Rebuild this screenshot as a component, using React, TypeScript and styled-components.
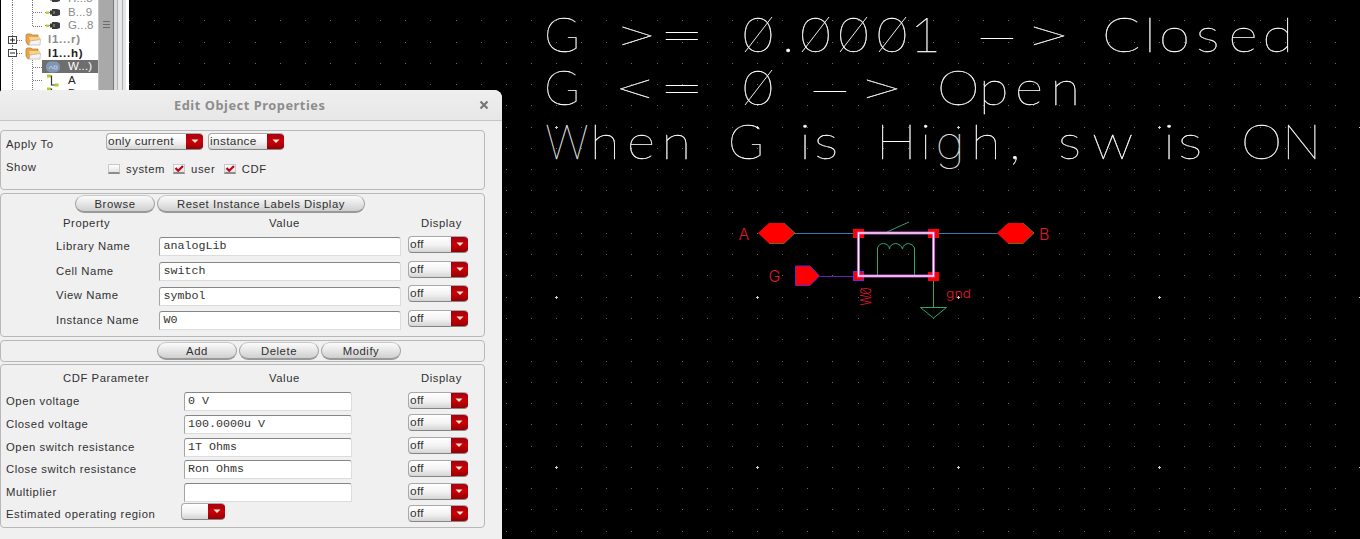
import React from "react";
import styled, { createGlobalStyle } from "styled-components";

const Global = createGlobalStyle`
  html, body { margin: 0; padding: 0; background: #000; }
  * { box-sizing: border-box; }
`;

const Screen = styled.div`
  position: relative;
  width: 1360px;
  height: 539px;
  overflow: hidden;
  background: #000;
  font-family: "Liberation Sans", Arial, sans-serif;
`;

const Canvas = styled.svg`
  display: block;
  width: 1360px;
  height: 539px;
`;

/* ---------- navigator ---------- */

const Navigator = styled.div`
  position: absolute;
  left: 1px;
  top: 0;
  display: flex;
  width: 128px;
  height: 92px;
  overflow: hidden;
  background: #fff;
`;

const Tree = styled.div`
  width: 97px;
  margin-top: -8px;
`;

const TreeRow = styled.div`
  display: flex;
  align-items: center;
  height: 13.6px;
`;

const Guide = styled.svg`
  flex: none;
  display: block;
`;

const TreeItem = styled.div<{ $selected?: boolean; $bold?: boolean; $dim?: boolean }>`
  display: flex;
  align-items: center;
  flex: 1;
  height: 13px;
  gap: 7px;
  padding-left: 3px;
  background: ${(p) => (p.$selected ? "#6e6e6e" : "transparent")};
  color: ${(p) => (p.$selected ? "#fff" : p.$dim ? "#8a8a8a" : "#222")};
  font-size: 11.5px;
  font-weight: ${(p) => (p.$bold ? 700 : 400)};
  letter-spacing: ${(p) => (p.$bold ? 0.75 : 0.1)}px;
  line-height: 13px;
  white-space: nowrap;
`;

const ScrollTrack = styled.div`
  display: flex;
  flex-direction: column;
  align-items: center;
  gap: 2px;
  width: 16px;
  padding-top: 21px;
  background: #a9a9a9;
  border-right: 1px solid #777;
  border-left: 1px solid #c4c4c4;
`;

const Grip = styled.div`
  width: 7px;
  height: 1px;
  background: #6b6b6b;
`;

const Frame = styled.div`
  flex: 1;
  background: linear-gradient(90deg, #dcdcdc 0 3px, #b4b4b4 3px 4px, #e9e9e9 4px 8px, #a9b0b4 8px 9px, #e4e6e8 9px 12px, #fff 12px);
`;

/* ---------- dialog ---------- */

const Dialog = styled.section`
  position: absolute;
  left: 0;
  top: 90px;
  width: 502px;
  height: 460px;
  background: #f1f0f1;
  border-radius: 3px 8px 0 0;
  overflow: hidden;
  color: #303030;
`;

const TitleBar = styled.header`
  display: flex;
  align-items: center;
  height: 31px;
  padding: 0 13px 0 174px;
  background: linear-gradient(#efefef, #e8e7e7);
  border-bottom: 1px solid #c6c6c6;
`;

const Title = styled.h1`
  flex: 1;
  margin: 0;
  font: 700 12.8px/31px "Noto Sans", sans-serif;
  letter-spacing: 0.55px;
  color: #8d8d8d;
`;

const Group = styled.div<{ $h: number; $mt: number }>`
  display: flex;
  flex-direction: column;
  width: 485px;
  height: ${(p) => p.$h}px;
  margin-top: ${(p) => p.$mt}px;
  border: 1px solid #b8b8b8;
  border-radius: 4px;
`;

const Text = styled.span<{ $w?: number; $pad?: number }>`
  flex: none;
  width: ${(p) => (p.$w ? p.$w + "px" : "auto")};
  padding-left: ${(p) => p.$pad ?? 0}px;
  font-size: 11.3px;
  line-height: 16px;
  letter-spacing: 0.55px;
  white-space: nowrap;
`;

const Line = styled.div<{ $h: number; $pad?: number; $gap?: number }>`
  display: flex;
  flex: none;
  align-items: center;
  gap: ${(p) => p.$gap ?? 0}px;
  height: ${(p) => p.$h}px;
  padding-left: ${(p) => p.$pad ?? 0}px;
`;

const Button = styled.button<{ $w: number }>`
  width: ${(p) => p.$w}px;
  height: 18px;
  padding: 0;
  border: 1px solid #a2a2a2;
  border-top-color: #c6c6c6;
  border-bottom: 2px solid #999;
  border-radius: 9px;
  background: linear-gradient(#fbfbfb, #e6e6e6 50%, #cfcfcf);
  color: #303030;
  font: 11.3px/14px "Liberation Sans", sans-serif;
  letter-spacing: 0.55px;
`;

const Combo = styled.div<{ $w: number }>`
  display: flex;
  flex: none;
  align-items: stretch;
  width: ${(p) => p.$w}px;
  height: 17px;
  border: 1px solid #a8a8a8;
  border-bottom-color: #858585;
  border-right: 0;
  border-radius: 4px;
  background: linear-gradient(#fff, #f2f2f2 55%, #d4d4d4);
  overflow: hidden;
`;

const ComboValue = styled.span`
  flex: 1;
  padding-left: 1px;
  font-size: 11.8px;
  line-height: 14px;
  letter-spacing: 0.35px;
  white-space: nowrap;
`;

const ComboArrow = styled.span`
  display: flex;
  align-items: center;
  justify-content: center;
  width: 17px;
  margin: -1px 0;
  background: linear-gradient(#a00010, #c80008 50%, #8e0004);
`;

const Field = styled.div<{ $w: number }>`
  flex: none;
  width: ${(p) => p.$w}px;
  height: 19px;
  padding-left: 3.5px;
  border: 1px solid #dcdcdc;
  border-top: 1px solid #858585;
  border-left-color: #a4a4a4;
  border-radius: 3px 3px 0 0;
  background: #fff;
  font: 11.67px/17px "Liberation Mono", monospace;
  color: #333;
  white-space: pre;
`;

const Grid = styled.div<{ $cols: string; $row: string; $mt?: number }>`
  display: grid;
  grid-template-columns: ${(p) => p.$cols};
  grid-auto-rows: ${(p) => p.$row};
  align-items: start;
  margin-top: ${(p) => p.$mt ?? 0}px;
`;

const Cell = styled.div<{ $mt?: number; $pad?: number }>`
  padding-top: ${(p) => p.$mt ?? 0}px;
  padding-left: ${(p) => p.$pad ?? 0}px;
  line-height: 0;
`;

const Check = styled.span`
  display: block;
  width: 12px;
  height: 10px;
  border: 1px solid #c8c8c8;
  border-bottom: 2px solid #8c8c8c;
  background: linear-gradient(#fff, #e4e4e4);
`;

const CheckItem = styled.label<{ $mr: number }>`
  display: flex;
  align-items: center;
  gap: 6px;
  margin-right: ${(p) => p.$mr}px;
`;

const CheckMark = styled.svg`
  display: block;
  overflow: visible;
`;

function Select({ w, value }: { w: number; value: string }) {
  return (
    <Combo $w={w}>
      <ComboValue>{value}</ComboValue>
      <ComboArrow>
        <svg width="8" height="5" viewBox="0 0 8 5">
          <path d="M0.5 0.5H7.5L4 4Z" fill="#f6ecd2" />
        </svg>
      </ComboArrow>
    </Combo>
  );
}

function CheckBox({ label, on, mr }: { label: string; on?: boolean; mr: number }) {
  return (
    <CheckItem $mr={mr}>
      <Check>
        {on && (
          <CheckMark width="10" height="8">
            <path d="M1.5 3L4.2 5.8L9 1" fill="none" stroke="#c4001a" strokeWidth="2.2" />
          </CheckMark>
        )}
      </Check>
      <Text>{label}</Text>
    </CheckItem>
  );
}

/* ---------- tree drawing ---------- */

function Folder() {
  return (
    <svg width="16" height="13" viewBox="0 0 16 13">
      <path d="M1 2L2 1H6L7 2H13V10L3 12L1 9Z" fill="#e8a548" stroke="#b87a2c" strokeWidth="0.7" />
      <path d="M4 4L15 4L15.5 7L5 8Z" fill="#f9d287" />
      <path d="M5 8L15.5 6.5L15 12H4Z" fill="#f4f4f8" stroke="#b7a890" strokeWidth="0.6" />
    </svg>
  );
}

function Pin() {
  return (
    <svg width="16" height="9" viewBox="0 0 16 9">
      <path d="M0 4.5H6" stroke="#888" />
      <rect x="1" y="3.5" width="3" height="2.5" fill="#c2d420" />
      <path d="M5 2.5H7V1H12L15 2V7L12 8H7V6.5H5Z" fill="#3a3a3a" />
      <path d="M9 3V6" stroke="#aaa" />
    </svg>
  );
}

function Net() {
  return (
    <svg width="16" height="13" viewBox="0 0 16 13">
      <path d="M4 2H6.5V11H11" fill="none" stroke="#333" strokeWidth="1.2" />
      <rect x="2" y="0.5" width="3.5" height="3" fill="#b5cc18" />
      <rect x="10" y="9.5" width="3.5" height="3" fill="#b5cc18" />
    </svg>
  );
}

function Chip() {
  return (
    <svg width="16" height="12" viewBox="0 0 16 12">
      <rect x="1" y="0.5" width="14" height="11" rx="5" fill="#8196b4" />
      <path d="M4 8L6 5L8 8M9 5H12V8H9Z" fill="none" stroke="#c8d5e8" strokeWidth="0.8" />
    </svg>
  );
}

function Guides({ kind }: { kind: "child" | "last" | "plus" | "minus" }) {
  const folder = kind === "plus" || kind === "minus";
  const dash = { stroke: "#777", strokeDasharray: "1 1" };
  return (
    <Guide width={folder ? 21 : 41} height="14">
      <path d="M11.5 0V14" {...dash} />
      {folder ? (
        <>
          <path d="M16 7.5H21" {...dash} />
          <rect x="7.5" y="3.5" width="8" height="7" fill="#fff" stroke="#444" />
          <path d={kind === "plus" ? "M9 7H14M11.5 4.5V9.5" : "M9 7H14"} stroke="#222" />
        </>
      ) : (
        <>
          <path d={kind === "last" ? "M31.5 0V7" : "M31.5 0V14"} {...dash} />
          <path d="M32 7.5H41" {...dash} />
        </>
      )}
    </Guide>
  );
}

/* ---------- schematic ---------- */

const ANN = {
  fontFamily: "Lato, sans-serif",
  fontWeight: 100,
  fontSize: 48.5,
  fill: "#fff",
  stroke: "#fff",
  strokeWidth: 0.3,
};

/* Each run: its text, baseline, pen position of every glyph, horizontal stretch. */
type Run = { t: string; y: number; x: number[]; s?: number };
const runs: Run[] = [
  { t: "G", y: 52, x: [544] },
  { t: ">=", y: 52, x: [613, 659], s: 1.62 },
  { t: "0.0001", y: 52, x: [742.5, 782, 800, 838, 876.5, 910], s: 1.1 },
  { t: "–>", y: 52, x: [973, 1024], s: 1.7 },
  { t: "Closed", y: 52, x: [1102, 1144, 1159, 1196, 1228.5, 1262.5], s: 1.16 },
  { t: "G", y: 105, x: [544] },
  { t: "<=", y: 105, x: [613, 659], s: 1.62 },
  { t: "0", y: 105, x: [742.5], s: 1.1 },
  { t: "–>", y: 105, x: [806, 857], s: 1.7 },
  { t: "Open", y: 105, x: [937, 979, 1015, 1050.5], s: 1.12 },
  { t: "W", y: 158.5, x: [545.5], s: 0.88 },
  { t: "hen", y: 158.5, x: [590, 627, 661.5], s: 1.12 },
  { t: "G", y: 158.5, x: [728] },
  { t: "is", y: 158.5, x: [799, 814], s: 1.2 },
  { t: "High,", y: 158.5, x: [876, 920, 935.5, 971, 1009], s: 1.12 },
  { t: "sw", y: 158.5, x: [1058, 1092], s: 1.14 },
  { t: "is", y: 158.5, x: [1163, 1178], s: 1.2 },
  { t: "ON", y: 158.5, x: [1241, 1282], s: 1.08 },
];

const slashes: [number, number][] = [[745, 52], [802, 52], [840, 52], [879, 52], [745, 105]];

const STEP_X = 25.125;
const STEP_Y = 21.27;

function Dots() {
  const out: React.ReactElement[] = [];
  for (let i = -17; i <= 32; i++) {
    for (let j = -5; j <= 19; j++) {
      const x = Math.round(556 + i * STEP_X);
      const y = Math.round(127 + j * STEP_Y - 0.4);
      if (x < 503 && y > 90) continue;
      const major = i % 8 === 0 && j % 8 === 0 && x > 500;
      out.push(
        major ? (
          <path key={i + "_" + j} d={`M${x - 1} ${y + 0.5}h3M${x + 0.5} ${y - 1}v3`} stroke="#ccc" />
        ) : (
          <rect key={i + "_" + j} x={x} y={y} width="1" height="1" fill="#6a6a6a" />
        )
      );
    }
  }
  return <g>{out}</g>;
}

function Schematic() {
  return (
    <Canvas viewBox="0 0 1360 539">
      <Dots />
      {runs.map((r, i) => {
        const s = r.s ?? 1;
        return (
          <text
            key={i}
            transform={`translate(${r.x[0]} ${r.y}) scale(${s} 1)`}
            x={r.x.map((v) => (v - r.x[0]) / s).join(" ")}
            y={0}
            {...ANN}
          >
            {r.t.split(/(g)/).map((part, k) =>
              part === "g" ? (
                <tspan key={k} fontFamily="Inter, sans-serif" fontSize="45" fill="#ddd" stroke="none">g</tspan>
              ) : (
                part
              )
            )}
          </text>
        );
      })}
      {slashes.map(([x, y], i) => (
        <path key={i} d={`M${x} ${y}L${x + 27} ${y - 35}`} stroke="#eee" strokeWidth="1" />
      ))}
      <path d="M794 233.5H858M934 233.5H998" stroke="#3478ac" strokeWidth="1.2" />
      <path d="M820 276.5H858" stroke="#6a1fb0" strokeWidth="1.2" />
      <path d="M887 232L909 222M877.5 275V248Q879 243.5 883.5 243.5Q889 244 889.5 249Q890 244 895.5 243.5Q901 244 902.5 249Q903 244 908.5 243.5Q913 244 914.5 248V275M933.5 281V307.5M920.5 307.5H946.5L933.5 318Z" fill="none" stroke="#2fa566" />
      <path d="M758 233L769 223H784L795 233L784 243.5H769Z" fill="#f00" />
      <path d="M997 233L1008 223H1023L1034 233L1023 243.5H1008Z" fill="#f00" />
      <path d="M784 223L795 233L784 243.5H769M1023 223L1034 233L1023 243.5H1008" fill="none" stroke="#4c9a30" strokeWidth="0.7" />
      <path d="M795.5 266H810L819.5 276L810 285.5H795.5Z" fill="#f00" stroke="#6a1fd0" />
      <path d="M853 229h11v9h-11zM928 229h11v9h-11zM928 272h11v9h-11zM853 272h11v9h-11z" fill="#f00" />
      <rect x="853.5" y="271.5" width="10" height="9" fill="none" stroke="#7a20e0" />
      <rect x="858.5" y="233" width="75" height="43" fill="none" stroke="#c850d0" strokeWidth="3" />
      <rect x="858.5" y="233" width="75" height="43" fill="none" stroke="#fff" strokeWidth="1.2" />
      <g fontFamily="Inter, sans-serif" fontWeight="300" fill="#e0182c">
        <text x="738.5" y="239.5" fontSize="16">A</text>
        <text x="768.5" y="281.5" fontSize="16">G</text>
        <text x="1039" y="239.5" fontSize="16">B</text>
        <text x="946" y="298" fontSize="11.5" textLength="25" lengthAdjust="spacingAndGlyphs">gnd</text>
        <text transform="translate(871 305.5) rotate(-90)" fontSize="14" textLength="18" lengthAdjust="spacingAndGlyphs">W0</text>
      </g>
      <path d="M871 296L861 288" stroke="#e0182c" strokeWidth="0.8" />
    </Canvas>
  );
}

const props = [
  ["Library Name", "analogLib"],
  ["Cell Name", "switch"],
  ["View Name", "symbol"],
  ["Instance Name", "W0"],
];

const params = [
  ["Open voltage", "0 V"],
  ["Closed voltage", "100.0000u V"],
  ["Open switch resistance", "1T Ohms"],
  ["Close switch resistance", "Ron Ohms"],
  ["Multiplier", ""],
];

export default function App() {
  return (
    <Screen>
      <Global />
      <Schematic />
      <Navigator>
        <Tree>
          <TreeRow><Guides kind="child" /><TreeItem $dim><Pin />H...8</TreeItem></TreeRow>
          <TreeRow><Guides kind="child" /><TreeItem $dim><Pin />B...9</TreeItem></TreeRow>
          <TreeRow><Guides kind="last" /><TreeItem $dim><Pin />G...8</TreeItem></TreeRow>
          <TreeRow><Guides kind="plus" /><TreeItem $dim $bold><Folder />l1...r)</TreeItem></TreeRow>
          <TreeRow><Guides kind="minus" /><TreeItem $bold><Folder />l1...h)</TreeItem></TreeRow>
          <TreeRow><Guides kind="child" /><TreeItem $selected><Chip />W...)</TreeItem></TreeRow>
          <TreeRow><Guides kind="child" /><TreeItem><Net />A</TreeItem></TreeRow>
          <TreeRow><Guides kind="child" /><TreeItem><Net />B</TreeItem></TreeRow>
        </Tree>
        <ScrollTrack><Grip /><Grip /><Grip /></ScrollTrack>
        <Frame />
      </Navigator>
      <Dialog>
        <TitleBar>
          <Title>Edit Object Properties</Title>
          <svg width="10" height="10" viewBox="0 0 10 10">
            <path d="M1.5 1.5L8.5 8.5M8.5 1.5L1.5 8.5" stroke="#777" strokeWidth="2.2" />
          </svg>
        </TitleBar>

        <Group $h={60} $mt={9}>
          <Grid $cols="105px auto" $row="auto">
            <Cell $mt={5} $pad={5}><Text>Apply To</Text></Cell>
            <Cell $mt={2}>
              <Line $h={17} $gap={5}>
                <Select w={97} value="only current" />
                <Select w={76} value="instance" />
              </Line>
            </Cell>
            <Cell $mt={7} $pad={5}><Text>Show</Text></Cell>
            <Cell $mt={9.4} $pad={2}>
              <Line $h={16}>
                <CheckBox label="system" mr={8} />
                <CheckBox label="user" on mr={8.5} />
                <CheckBox label="CDF" on mr={0} />
              </Line>
            </Cell>
          </Grid>
        </Group>

        <Group $h={144} $mt={3}>
          <Line $h={20} $pad={74} $gap={2}>
            <Button $w={80}>Browse</Button>
            <Button $w={208}>Reset Instance Labels Display</Button>
          </Line>
          <Line $h={17}>
            <Text $w={268} $pad={62}>Property</Text>
            <Text $w={152}>Value</Text>
            <Text>Display</Text>
          </Line>
          <Grid $cols="158px 249px auto" $row="24.6px">
            {props.map(([k, v]) => (
              <React.Fragment key={k}>
                <Cell $mt={7} $pad={55}><Text>{k}</Text></Cell>
                <Cell $mt={6.4}><Field $w={242}>{v}</Field></Cell>
                <Cell $mt={5}><Select w={60} value="off" /></Cell>
              </React.Fragment>
            ))}
          </Grid>
        </Group>

        <Group $h={22} $mt={3}>
          <Line $h={20} $pad={156} $gap={2}>
            <Button $w={80}>Add</Button>
            <Button $w={80}>Delete</Button>
            <Button $w={80}>Modify</Button>
          </Line>
        </Group>

        <Group $h={164} $mt={2}>
          <Line $h={26}>
            <Text $w={268} $pad={62}>CDF Parameter</Text>
            <Text $w={152}>Value</Text>
            <Text>Display</Text>
          </Line>
          <Grid $cols="182.6px 224.4px auto" $row="22.8px">
            {params.map(([k, v]) => (
              <React.Fragment key={k}>
                <Cell $mt={2} $pad={5}><Text>{k}</Text></Cell>
                <Cell $mt={1}><Field $w={168}>{v}</Field></Cell>
                <Cell $mt={0.5}><Select w={60} value="off" /></Cell>
              </React.Fragment>
            ))}
          </Grid>
          <Grid $cols="180px 227px auto" $row="22px" $mt={-2}>
            <Cell $mt={3} $pad={5}><Text>Estimated operating region</Text></Cell>
            <Cell><Select w={44} value="" /></Cell>
            <Cell $mt={2}><Select w={60} value="off" /></Cell>
          </Grid>
        </Group>
      </Dialog>
    </Screen>
  );
}
